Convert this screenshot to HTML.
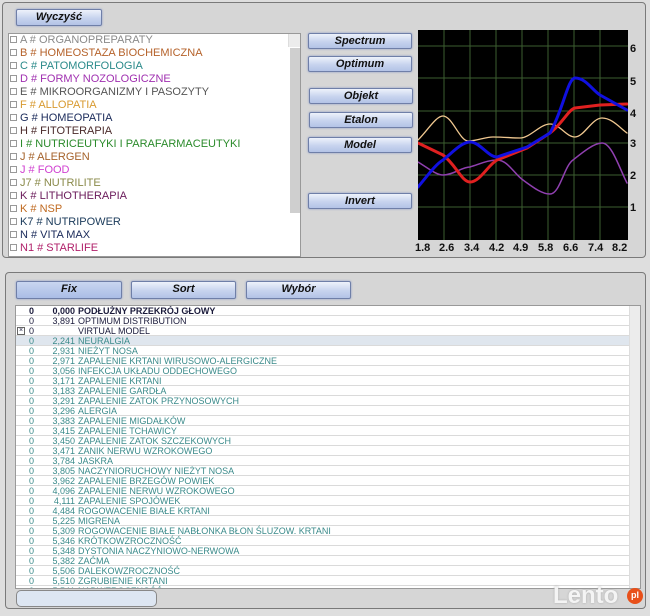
<!DOCTYPE html>
<html><head><meta charset="utf-8"><style>
*{margin:0;padding:0;box-sizing:border-box}
body{width:650px;height:616px;background:#dedede;position:relative;overflow:hidden;font-family:"Liberation Sans","DejaVu Sans",sans-serif}
.panel{position:absolute;border:1px solid #7a7a7a;border-radius:4px;background:#d6d6d6}
.btn{position:absolute;height:16px;border:1px solid #6f7fa8;border-radius:2px;background:linear-gradient(#eef2fb,#c7d3ee 55%,#b3c3e6);box-shadow:0 0 2px #8a9ac8;font:italic bold 11px "Liberation Sans",sans-serif;color:#111;text-align:center;line-height:14px}
.list{position:absolute;left:8px;top:33px;width:293px;height:224px;background:#fff;border:1px solid #999;overflow:hidden}
.list div{height:13px;font-size:11px;line-height:13px;white-space:nowrap;padding-left:1px}
.list span.cb{display:inline-block;width:7px;height:7px;border:1px solid #999;margin-right:3px;vertical-align:0px}
.sb{position:absolute;right:0;top:0;width:12px;height:100%;background:#ececec;border-left:1px solid #ddd}
.sb .th{position:absolute;left:1px;top:14px;width:10px;height:165px;background:#cfcfcf}
.tbl{position:absolute;left:15px;top:305px;width:626px;height:284px;background:#fff;border:1px solid #999;overflow:hidden}
.r{position:relative;height:10px;border-bottom:1px solid #dadada;font-size:9px;line-height:10px;color:#3a8a8a;white-space:nowrap}
.r .z{position:absolute;left:8px;width:10px;text-align:right}
.r .v{position:absolute;left:32px;width:27px;text-align:right;overflow:hidden}
.r .n{position:absolute;left:62px}
.r.h{background:#dfe6ee}
.r.b{color:#1a1a3a}
</style></head><body>
<div class="panel" style="left:2px;top:2px;width:644px;height:256px"></div>
<div class="btn" style="left:16px;top:9px;width:86px;height:17px">Wyczyść</div>
<div class="list">
<div style="color:#8a8a8a"><span class="cb"></span>A # ORGANOPREPARATY</div>
<div style="color:#b5622a"><span class="cb"></span>B # HOMEOSTAZA BIOCHEMICZNA</div>
<div style="color:#2a8a8a"><span class="cb"></span>C # PATOMORFOLOGIA</div>
<div style="color:#a030b0"><span class="cb"></span>D # FORMY NOZOLOGICZNE</div>
<div style="color:#555"><span class="cb"></span>E # MIKROORGANIZMY I PASOZYTY</div>
<div style="color:#d89a30"><span class="cb"></span>F # ALLOPATIA</div>
<div style="color:#1a2a5a"><span class="cb"></span>G # HOMEOPATIA</div>
<div style="color:#4a2a2a"><span class="cb"></span>H # FITOTERAPIA</div>
<div style="color:#2a8a2a"><span class="cb"></span>I # NUTRICEUTYKI I PARAFARMACEUTYKI</div>
<div style="color:#a5622a"><span class="cb"></span>J # ALERGEN</div>
<div style="color:#d040d0"><span class="cb"></span>J # FOOD</div>
<div style="color:#8a8a4a"><span class="cb"></span>J7 # NUTRILITE</div>
<div style="color:#6a1a5a"><span class="cb"></span>K # LITHOTHERAPIA</div>
<div style="color:#c06a20"><span class="cb"></span>K # NSP</div>
<div style="color:#1a3a5a"><span class="cb"></span>K7 # NUTRIPOWER</div>
<div style="color:#1a2a5a"><span class="cb"></span>N # VITA MAX</div>
<div style="color:#b0206a"><span class="cb"></span>N1 # STARLIFE</div>
<div class="sb"><div class="th"></div></div>
</div>
<div class="btn" style="left:308px;top:33px;width:104px">Spectrum</div>
<div class="btn" style="left:308px;top:56px;width:104px">Optimum</div>
<div class="btn" style="left:309px;top:88px;width:104px">Objekt</div>
<div class="btn" style="left:309px;top:112px;width:104px">Etalon</div>
<div class="btn" style="left:308px;top:137px;width:104px">Model</div>
<div class="btn" style="left:308px;top:193px;width:104px">Invert</div>
<svg style="position:absolute;left:418px;top:30px" width="210" height="210">
<rect width="210" height="210" fill="#000"/>
<g stroke="#3c5e30" stroke-width="1">
<line x1="26" y1="0" x2="26" y2="210"/><line x1="52" y1="0" x2="52" y2="210"/><line x1="78" y1="0" x2="78" y2="210"/><line x1="104" y1="0" x2="104" y2="210"/><line x1="130" y1="0" x2="130" y2="210"/><line x1="156" y1="0" x2="156" y2="210"/><line x1="182" y1="0" x2="182" y2="210"/>
<line x1="0" y1="16" x2="210" y2="16"/><line x1="0" y1="48" x2="210" y2="48"/><line x1="0" y1="81" x2="210" y2="81"/><line x1="0" y1="113" x2="210" y2="113"/><line x1="0" y1="145" x2="210" y2="145"/><line x1="0" y1="177" x2="210" y2="177"/>
</g>
<g fill="none" stroke-linejoin="round" stroke-linecap="round">
<path d="M0 110 C10 100 18 86 25 86 C34 86 42 111 50 111 C60 111 66 107 75 107 C86 107 94 108 102 108 C112 108 122 94 132 94 C142 94 148 107 157 107 C166 107 174 88 184 88 C194 88 202 98 209 103" stroke="#f0c890" stroke-width="1.3"/>
<path d="M0 132 C10 138 18 145 25 145 C35 145 44 137 52 137 C62 134 70 130 79 130 C90 130 97 145 105 150 C116 158 124 164 132 164 C142 164 146 136 155 130 C165 122 176 113 184 113 C194 113 202 140 209 153" stroke="#9040b0" stroke-width="1.5"/>
<path d="M0 113 L25 125 C38 135 44 152 52 152 C62 152 70 135 79 130 L109 118 L132 103 C145 93 150 80 157 78 L182 75 L209 74" stroke="#e02020" stroke-width="3"/>
<path d="M0 157 C10 145 18 134 25 130 C35 122 44 112 52 112 C62 112 70 127 79 127 L109 117 L132 103 C145 80 150 48 157 48 C168 48 174 60 182 65 L209 80" stroke="#1010e0" stroke-width="3"/>
</g>
</svg>
<div style="position:absolute;left:630px;top:42px;font:bold 11px 'Liberation Sans',sans-serif;color:#111;line-height:14px">
<div style="position:absolute;top:0">6</div><div style="position:absolute;top:33px">5</div><div style="position:absolute;top:65px">4</div><div style="position:absolute;top:95px">3</div><div style="position:absolute;top:127px">2</div><div style="position:absolute;top:159px">1</div></div>
<div style="position:absolute;left:414px;top:242px;width:220px;font:bold 11px 'Liberation Sans',sans-serif;color:#111;white-space:nowrap">
<span style="position:absolute;left:1px">1.8</span><span style="position:absolute;left:25px">2.6</span><span style="position:absolute;left:50px">3.4</span><span style="position:absolute;left:75px">4.2</span><span style="position:absolute;left:99px">4.9</span><span style="position:absolute;left:124px">5.8</span><span style="position:absolute;left:149px">6.6</span><span style="position:absolute;left:174px">7.4</span><span style="position:absolute;left:198px">8.2</span></div>

<div class="panel" style="left:5px;top:272px;width:641px;height:337px"></div>
<div class="btn" style="left:16px;top:281px;width:106px;height:18px;background:linear-gradient(#c9d6f0,#aabde6)">Fix</div>
<div class="btn" style="left:131px;top:281px;width:105px;height:18px">Sort</div>
<div class="btn" style="left:246px;top:281px;width:105px;height:18px">Wybór</div>
<div class="tbl">
<div class="r b" style="font-weight:bold"><span class="z">0</span><span class="v">0,000</span><span class="n">PODŁUŻNY PRZEKRÓJ GŁOWY</span></div>
<div class="r b"><span class="z">0</span><span class="v">3,891</span><span class="n">OPTIMUM DISTRIBUTION</span></div>
<div class="r b"><span style="position:absolute;left:1px;top:1px;width:8px;height:8px;border:1px solid #666;font-size:7px;line-height:6px;text-align:center">×</span><span class="z">0</span><span class="n">VIRTUAL MODEL</span></div>
<div class="r h"><span class="z">0</span><span class="v">2,241</span><span class="n">NEURALGIA</span></div>
<div class="r"><span class="z">0</span><span class="v">2,931</span><span class="n">NIEŻYT NOSA</span></div>
<div class="r"><span class="z">0</span><span class="v">2,971</span><span class="n">ZAPALENIE KRTANI WIRUSOWO-ALERGICZNE</span></div>
<div class="r"><span class="z">0</span><span class="v">3,056</span><span class="n">INFEKCJA UKŁADU ODDECHOWEGO</span></div>
<div class="r"><span class="z">0</span><span class="v">3,171</span><span class="n">ZAPALENIE KRTANI</span></div>
<div class="r"><span class="z">0</span><span class="v">3,183</span><span class="n">ZAPALENIE GARDŁA</span></div>
<div class="r"><span class="z">0</span><span class="v">3,291</span><span class="n">ZAPALENIE ZATOK PRZYNOSOWYCH</span></div>
<div class="r"><span class="z">0</span><span class="v">3,296</span><span class="n">ALERGIA</span></div>
<div class="r"><span class="z">0</span><span class="v">3,383</span><span class="n">ZAPALENIE MIGDAŁKÓW</span></div>
<div class="r"><span class="z">0</span><span class="v">3,415</span><span class="n">ZAPALENIE TCHAWICY</span></div>
<div class="r"><span class="z">0</span><span class="v">3,450</span><span class="n">ZAPALENIE ZATOK SZCZEKOWYCH</span></div>
<div class="r"><span class="z">0</span><span class="v">3,471</span><span class="n">ZANIK NERWU WZROKOWEGO</span></div>
<div class="r"><span class="z">0</span><span class="v">3,784</span><span class="n">JASKRA</span></div>
<div class="r"><span class="z">0</span><span class="v">3,805</span><span class="n">NACZYNIORUCHOWY NIEŻYT NOSA</span></div>
<div class="r"><span class="z">0</span><span class="v">3,962</span><span class="n">ZAPALENIE BRZEGÓW POWIEK</span></div>
<div class="r"><span class="z">0</span><span class="v">4,096</span><span class="n">ZAPALENIE NERWU WZROKOWEGO</span></div>
<div class="r"><span class="z">0</span><span class="v">4,111</span><span class="n">ZAPALENIE SPOJÓWEK</span></div>
<div class="r"><span class="z">0</span><span class="v">4,484</span><span class="n">ROGOWACENIE BIAŁE KRTANI</span></div>
<div class="r"><span class="z">0</span><span class="v">5,225</span><span class="n">MIGRENA</span></div>
<div class="r"><span class="z">0</span><span class="v">5,309</span><span class="n">ROGOWACENIE BIAŁE NABŁONKA BŁON ŚLUZOW. KRTANI</span></div>
<div class="r"><span class="z">0</span><span class="v">5,346</span><span class="n">KRÓTKOWZROCZNOŚĆ</span></div>
<div class="r"><span class="z">0</span><span class="v">5,348</span><span class="n">DYSTONIA NACZYNIOWO-NERWOWA</span></div>
<div class="r"><span class="z">0</span><span class="v">5,382</span><span class="n">ZAĆMA</span></div>
<div class="r"><span class="z">0</span><span class="v">5,506</span><span class="n">DALEKOWZROCZNOŚĆ</span></div>
<div class="r"><span class="z">0</span><span class="v">5,510</span><span class="n">ZGRUBIENIE KRTANI</span></div>
<div class="r"><span class="z">0</span><span class="v">5,541</span><span class="n">NADWZROCZNOŚĆ</span></div>
<div class="sb" style="width:11px"></div>
</div>
<div style="position:absolute;left:16px;top:590px;width:141px;height:17px;border:1px solid #888;border-radius:5px;background:#dde6f2"></div>
<div style="position:absolute;left:553px;top:582px;font:bold 24px 'Liberation Sans',sans-serif;color:#f4f4f4;text-shadow:0 0 2px #aaa">Lento</div>
<div style="position:absolute;left:627px;top:588px;width:16px;height:16px;border-radius:50%;background:#e8501a;color:#fff;font:bold 9px 'Liberation Sans',sans-serif;text-align:center;line-height:15px">pl</div>
</body></html>
